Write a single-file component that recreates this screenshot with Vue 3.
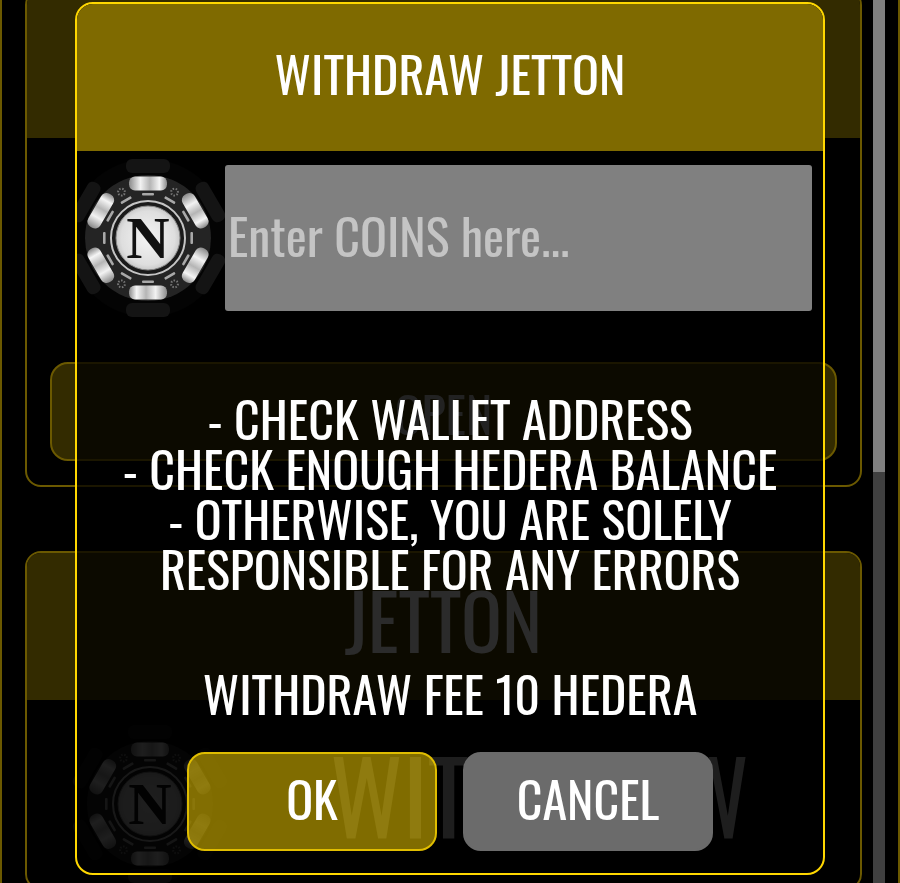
<template>
  <div class="page">
    <svg class="defs" width="0" height="0">
      <defs>
        <linearGradient id="pillShine" x1="0" y1="0" x2="1" y2="0">
          <stop offset="0" stop-color="#8a8a8a" />
          <stop offset="0.3" stop-color="#f2f2f2" />
          <stop offset="0.55" stop-color="#b5b5b5" />
          <stop offset="0.8" stop-color="#f5f5f5" />
          <stop offset="1" stop-color="#8a8a8a" />
        </linearGradient>
        <radialGradient id="faceShine" cx="0.5" cy="0.5" r="0.6">
          <stop offset="0" stop-color="#f4f4f4" />
          <stop offset="0.7" stop-color="#dedede" />
          <stop offset="1" stop-color="#b0b0b0" />
        </radialGradient>
        <symbol id="chip" viewBox="0 0 160 160">
          <circle cx="80" cy="80" r="79" fill="#040404" />
          <rect v-for="a in pillAngles" :key="'o' + a" x="58" y="1" width="44" height="14" rx="6" fill="#141414" :transform="`rotate(${a} 80 80)`" />
          <circle cx="80" cy="80" r="63" fill="#242424" />
          <rect v-for="a in pillAngles" :key="'p' + a" x="61" y="18.5" width="38" height="14" rx="6" fill="url(#pillShine)" :transform="`rotate(${a} 80 80)`" />
          <rect v-for="a in dashAngles" :key="'d' + a" x="74" y="35" width="12" height="2.6" rx="1" fill="#a8a8a8" :transform="`rotate(${a} 80 80)`" />
          <circle v-for="a in dotAngles" :key="'s' + a" cx="80" cy="27" r="3.4" fill="none" stroke="#777" stroke-width="2" stroke-dasharray="1.5 1.5" :transform="`rotate(${a} 80 80)`" />
          <circle cx="80" cy="80" r="37" fill="#1a1a1a" stroke="#c4c4c4" stroke-width="2" />
          <circle cx="80" cy="80" r="32" fill="url(#faceShine)" stroke="#8a8a8a" stroke-width="1" />
          <text x="80" y="100" class="chip-letter">N</text>
        </symbol>
      </defs>
    </svg>

    <div class="cards">
      <section class="card card-top">
        <div class="card-head"></div>
        <div class="card-body">
          <button class="open-btn">OPEN</button>
        </div>
      </section>
      <section class="card">
        <div class="card-head"><span class="card-title">JETTON</span></div>
        <div class="card-row">
          <svg class="chip chip-faded"><use href="#chip" /></svg>
          <span class="withdraw-btn">WITHDRAW</span>
        </div>
      </section>
    </div>
    <div class="scrollbar"><div class="scrollbar-thumb"></div></div>

    <div class="modal">
      <div class="modal-head">WITHDRAW JETTON</div>
      <div class="amount-row">
        <svg class="chip modal-chip"><use href="#chip" /></svg>
        <input class="amount-input" type="text" placeholder="Enter COINS here..." />
      </div>
      <div class="notes">
        <p v-for="line in notes" :key="line">{{ line }}</p>
      </div>
      <p class="fee">WITHDRAW FEE 10 HEDERA</p>
      <div class="actions">
        <button class="btn btn-ok">OK</button>
        <button class="btn btn-cancel">CANCEL</button>
      </div>
    </div>
  </div>
</template>

<script setup>
const pillAngles = [0, 60, 120, 180, 240, 300]
const dashAngles = [0, 30, 60, 90, 120, 150, 180, 210, 240, 270, 300, 330]
const dotAngles = [30, 330, 150, 210]

const notes = [
  '- CHECK WALLET ADDRESS',
  '- CHECK ENOUGH HEDERA BALANCE',
  '- OTHERWISE, YOU ARE SOLELY',
  'RESPONSIBLE FOR ANY ERRORS'
]
</script>

<style>
html,
body {
  margin: 0;
  background: #000;
}
</style>

<style scoped>
.page {
  position: relative;
  box-sizing: border-box;
  display: flex;
  width: 900px;
  height: 883px;
  overflow: hidden;
  background: #000;
  border-left: 2px solid #6b5900;
  border-right: 2px solid #6b5900;
  font-family: "Oswald", "Liberation Sans Narrow", "Liberation Sans", sans-serif;
  color: #fff;
  filter: blur(0.5px);
}

.defs {
  position: absolute;
}

.chip-letter {
  font-family: "Liberation Serif", serif;
  font-weight: 700;
  font-size: 60px;
  text-anchor: middle;
  fill: #111;
}

.cards {
  display: flex;
  flex-direction: column;
  gap: 64px;
  width: 837px;
  margin-left: 23px;
  margin-top: -11px;
}

.card {
  box-sizing: border-box;
  flex: none;
  border: 2px solid #6b5900;
  border-radius: 16px;
  overflow: hidden;
}

.card-top {
  height: 498px;
}

.card-head {
  display: flex;
  align-items: center;
  justify-content: center;
  box-sizing: border-box;
  height: 147px;
  padding-bottom: 16px;
  background: #332b00;
}

.card-title {
  font-size: 76px;
  color: #aaa;
}

.card-body {
  padding: 224px 23px 0;
}

.open-btn {
  display: block;
  box-sizing: border-box;
  width: 100%;
  height: 99px;
  background: #332b00;
  border: 2px solid #6b5900;
  border-radius: 18px;
  font: inherit;
  font-size: 50px;
  color: #888;
}

.card-row {
  display: flex;
  align-items: center;
  padding: 20px 0 0 43px;
}

.chip {
  display: block;
  flex: none;
  width: 160px;
  height: 160px;
}

.chip-faded {
  opacity: 0.5;
}

.withdraw-btn {
  margin-left: 100px;
  margin-bottom: 20px;
  font-size: 100px;
  color: #777;
  white-space: nowrap;
}

.scrollbar {
  flex: none;
  width: 12px;
  height: 100%;
  margin-left: 11px;
  background: #404040;
}

.scrollbar-thumb {
  height: 472px;
  background: #808080;
}

/* dialog sits over the page */
.modal {
  position: absolute;
  top: 2px;
  left: 73px;
  box-sizing: border-box;
  display: flex;
  flex-direction: column;
  width: 750px;
  height: 873px;
  background: rgba(0, 0, 0, 0.75);
  border: 2px solid #ffd700;
  border-radius: 18px;
  overflow: hidden;
}

.modal-head {
  display: flex;
  align-items: center;
  justify-content: center;
  box-sizing: border-box;
  flex: none;
  height: 147px;
  padding-bottom: 12px;
  background: #7f6a00;
  font-size: 50px;
}

.amount-row {
  display: flex;
  align-items: center;
  height: 146px;
  margin-top: 14px;
  padding-right: 11px;
}

.modal-chip {
  margin-left: -9px;
  margin-right: -3px;
}

.amount-input {
  flex: 1;
  min-width: 0;
  box-sizing: border-box;
  height: 146px;
  padding: 0 3px 8px;
  background: #808080;
  border: none;
  border-radius: 3px;
  font: inherit;
  font-size: 50px;
  color: #fff;
}

.amount-input::placeholder {
  color: #c4c4c4;
  opacity: 1;
}

.notes {
  margin-top: 81px;
  text-align: center;
  font-size: 50px;
  line-height: 50px;
}

.notes p,
.fee {
  margin: 0;
  white-space: nowrap;
}

.fee {
  margin-top: 75px;
  text-align: center;
  font-size: 50px;
  line-height: 50px;
}

.actions {
  display: flex;
  justify-content: center;
  gap: 26px;
  margin-top: 35px;
}

.btn {
  box-sizing: border-box;
  width: 250px;
  height: 99px;
  padding: 0 0 9px;
  border-radius: 18px;
  font: inherit;
  font-size: 50px;
  color: #fff;
}

.btn-ok {
  background: rgba(255, 215, 0, 0.5);
  border: 2px solid #e0bd00;
}

.btn-cancel {
  background: #6b6b6b;
  border: 2px solid #6b6b6b;
}
</style>
